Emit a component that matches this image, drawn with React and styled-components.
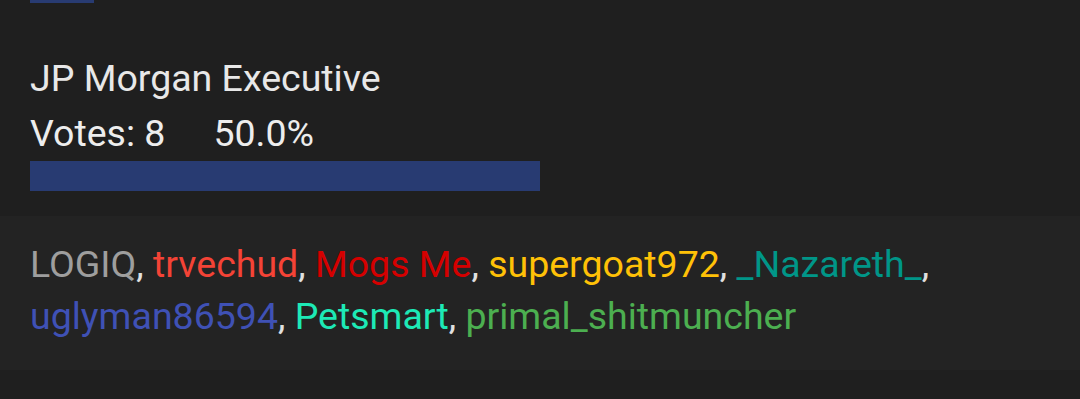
import React from "react";
import styled, { createGlobalStyle } from "styled-components";

const Global = createGlobalStyle`
  html, body {
    margin: 0;
    padding: 0;
    background: #1f1f1f;
  }
  body {
    font-family: Roboto, "Noto Sans", sans-serif;
    -webkit-font-smoothing: antialiased;
  }
`;

const Page = styled.div`
  width: 1080px;
  height: 399px;
  overflow: hidden;
  background: #1f1f1f;
`;

const Option = styled.div`
  padding: 0 30px;
  margin-top: ${(p) => p.$top || 0}px;
`;

const Title = styled.div`
  font-size: 37.5px;
  line-height: 55px;
  color: #e8e8e8;
`;

const Stats = styled.div`
  display: flex;
  gap: 48px;
  font-size: 37.5px;
  line-height: 55px;
  color: #ededed;
`;

const Track = styled.div`
  width: 100%;
  height: ${(p) => p.$h}px;
`;

const Fill = styled.div`
  height: 100%;
  background: #283b72;
`;

const Voters = styled.div`
  margin-top: 25px;
  background: #232323;
  padding: 22px 30px 28px;
  font-size: 37.5px;
  line-height: 52px;
  color: #e0e0e0;
`;

const Name = styled.span`
  color: ${(p) => p.$c};
`;

const voters = [
  { n: "LOGIQ", c: "#9e9e9e" },
  { n: "trvechud", c: "#f44336" },
  { n: "Mogs Me", c: "#d50000" },
  { n: "supergoat972", c: "#ffc107" },
  { n: "_Nazareth_", c: "#009688" },
  { n: "uglyman86594", c: "#3f51b5" },
  { n: "Petsmart", c: "#1de9b6" },
  { n: "primal_shitmuncher", c: "#4caf50" },
];

export default function App() {
  return (
    <Page>
      <Global />
      <Option>
        <Track $h={3}>
          <Fill style={{ width: "6.25%" }} />
        </Track>
      </Option>
      <Option $top={48}>
        <Title>JP Morgan Executive</Title>
        <Stats>
          <span>Votes: 8</span>
          <span>50.0%</span>
        </Stats>
        <Track $h={30}>
          <Fill style={{ width: "50%" }} />
        </Track>
      </Option>
      <Voters>
        {voters.map((v, i) => (
          <React.Fragment key={v.n}>
            <Name $c={v.c}>{v.n}</Name>
            {i < voters.length - 1 ? ", " : ""}
          </React.Fragment>
        ))}
      </Voters>
    </Page>
  );
}
